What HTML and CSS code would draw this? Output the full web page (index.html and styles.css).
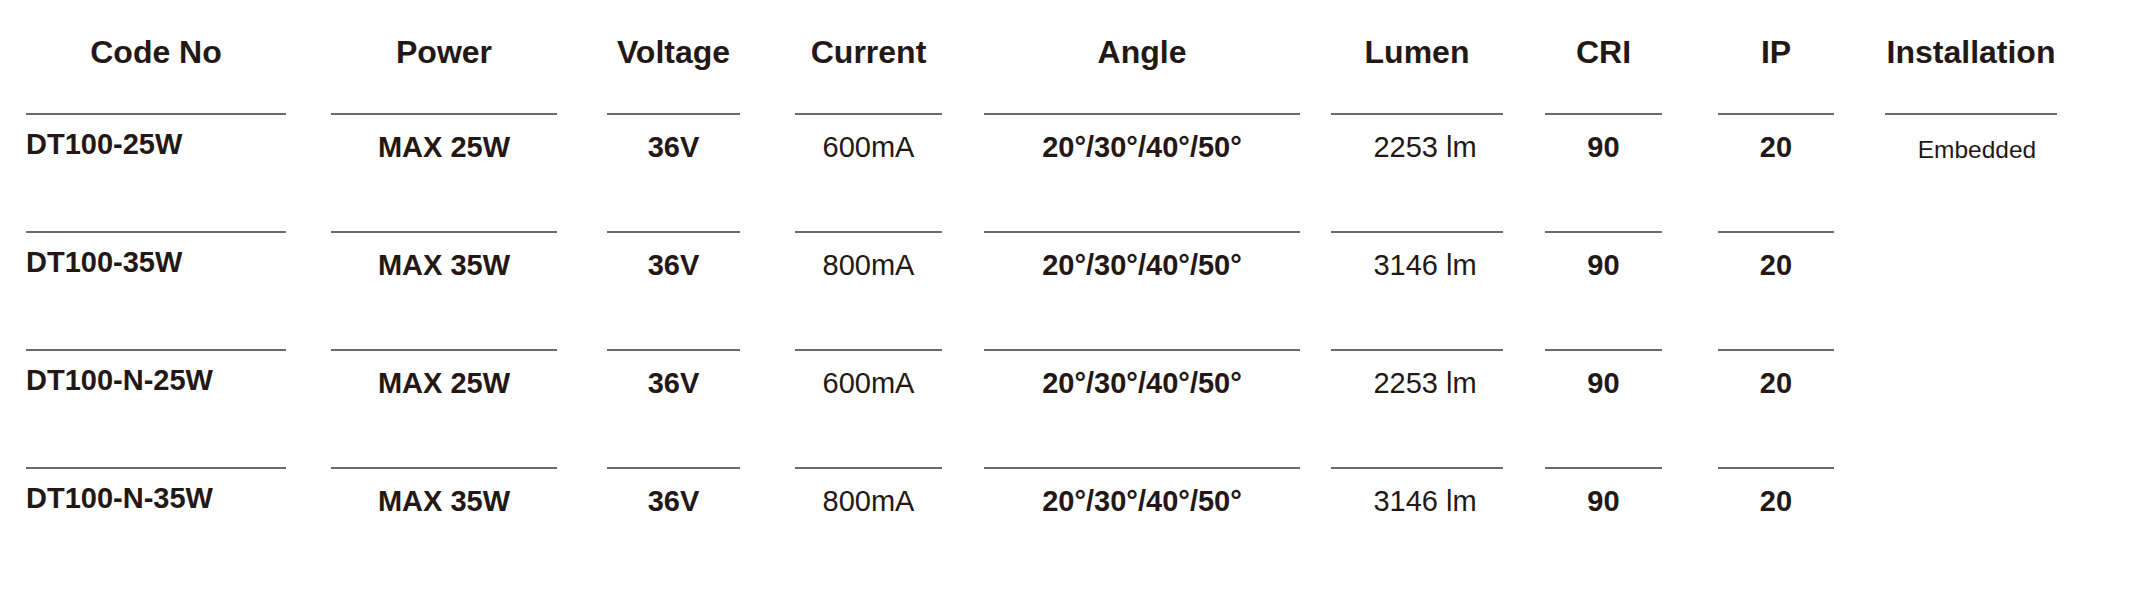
FILE: index.html
```html
<!DOCTYPE html>
<html lang="en">
<head>
<meta charset="utf-8">
<title>DT100 Specifications</title>
<link rel="stylesheet" href="styles.css">
</head>
<body>
<div class="spec">
  <div class="row head">
    <div class="cell c-code">Code No</div>
    <div class="cell c-power">Power</div>
    <div class="cell c-volt">Voltage</div>
    <div class="cell c-cur">Current</div>
    <div class="cell c-angle">Angle</div>
    <div class="cell c-lumen">Lumen</div>
    <div class="cell c-cri">CRI</div>
    <div class="cell c-ip">IP</div>
    <div class="cell c-inst">Installation</div>
  </div>
  <div class="row data">
    <div class="cell c-code b">DT100-25W</div>
    <div class="cell c-power b">MAX 25W</div>
    <div class="cell c-volt b">36V</div>
    <div class="cell c-cur">600mA</div>
    <div class="cell c-angle b">20°/30°/40°/50°</div>
    <div class="cell c-lumen">2253 lm</div>
    <div class="cell c-cri b">90</div>
    <div class="cell c-ip b">20</div>
    <div class="cell c-inst">Embedded</div>
  </div>
  <div class="row data">
    <div class="cell c-code b">DT100-35W</div>
    <div class="cell c-power b">MAX 35W</div>
    <div class="cell c-volt b">36V</div>
    <div class="cell c-cur">800mA</div>
    <div class="cell c-angle b">20°/30°/40°/50°</div>
    <div class="cell c-lumen">3146 lm</div>
    <div class="cell c-cri b">90</div>
    <div class="cell c-ip b">20</div>
  </div>
  <div class="row data">
    <div class="cell c-code b">DT100-N-25W</div>
    <div class="cell c-power b">MAX 25W</div>
    <div class="cell c-volt b">36V</div>
    <div class="cell c-cur">600mA</div>
    <div class="cell c-angle b">20°/30°/40°/50°</div>
    <div class="cell c-lumen">2253 lm</div>
    <div class="cell c-cri b">90</div>
    <div class="cell c-ip b">20</div>
  </div>
  <div class="row data">
    <div class="cell c-code b">DT100-N-35W</div>
    <div class="cell c-power b">MAX 35W</div>
    <div class="cell c-volt b">36V</div>
    <div class="cell c-cur">800mA</div>
    <div class="cell c-angle b">20°/30°/40°/50°</div>
    <div class="cell c-lumen">3146 lm</div>
    <div class="cell c-cri b">90</div>
    <div class="cell c-ip b">20</div>
  </div>
</div>
</body>
</html>
```
FILE: styles.css
```css
html, body {
  margin: 0;
  padding: 0;
  background: #ffffff;
}

body {
  font-family: "Liberation Sans", Arial, Helvetica, sans-serif;
  color: #231815;
  width: 2139px;
  height: 596px;
  overflow: hidden;
}

.spec {
  display: flex;
  flex-direction: column;
  padding-left: 26px;
}

.row {
  display: flex;
  align-items: flex-start;
  box-sizing: border-box;
}

.cell {
  box-sizing: border-box;
  text-align: center;
  white-space: nowrap;
}

/* column geometry */
.c-code  { width: 260px; }
.c-power { width: 226px; margin-left: 45px; }
.c-volt  { width: 133px; margin-left: 50px; }
.c-cur   { width: 147px; margin-left: 55px; }
.c-angle { width: 316px; margin-left: 42px; }
.c-lumen { width: 172px; margin-left: 31px; }
.c-cri   { width: 117px; margin-left: 42px; }
.c-ip    { width: 116px; margin-left: 56px; }
.c-inst  { width: 172px; margin-left: 51px; }

/* header */
.head {
  height: 113px;
}

.head .cell {
  padding-top: 36px;
  font-size: 32px;
  line-height: 32px;
  font-weight: bold;
}

/* data rows */
.data {
  height: 118px;
}

.data .cell {
  border-top: 2px solid #6d6a6a;
  padding-top: 18px;
  font-size: 29px;
  line-height: 29px;
  font-weight: normal;
}

.data .b {
  font-weight: bold;
}

.data .c-code {
  text-align: left;
  padding-top: 15px;
}

.data .c-lumen {
  padding-left: 16px;
}

.data .c-inst {
  font-size: 24.5px;
  padding-top: 20px;
  padding-left: 12px;
}
```
